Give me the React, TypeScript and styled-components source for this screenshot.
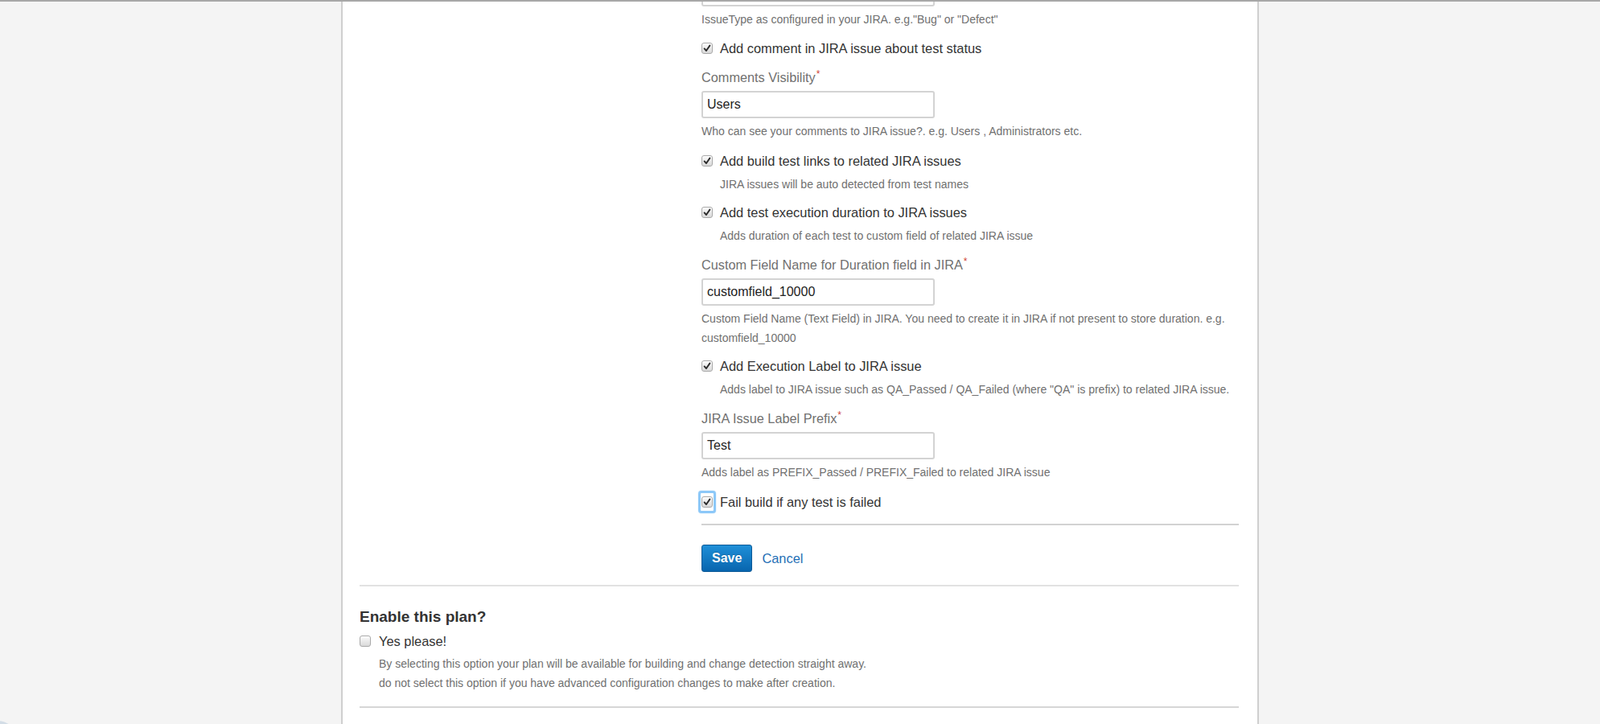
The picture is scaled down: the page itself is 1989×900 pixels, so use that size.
import styled, { createGlobalStyle } from 'styled-components';

const GlobalStyle = createGlobalStyle`
  html, body {
    margin: 0;
    padding: 0;
    height: 900px;
    overflow: hidden;
    background: #f4f4f4;
    font-family: "Liberation Sans", Arial, Helvetica, sans-serif;
    color: #333;
  }
`;

type Check = { label: string; sub?: string; checked?: boolean; focused?: boolean };

const CheckItem = ({ label, sub, checked = true, focused }: Check) => (
  <Group $gap={0}>
    <CheckRow>
      {focused ? (
        <FocusRing>
          <Box checked={checked} />
        </FocusRing>
      ) : (
        <Box checked={checked} />
      )}
      <CheckLabel>{label}</CheckLabel>
    </CheckRow>
    {sub && <SubText>{sub}</SubText>}
  </Group>
);

const Box = ({ checked }: { checked: boolean }) => (
  <CheckBox>
    {checked && (
      <svg width="14" height="14" viewBox="0 0 14 14">
        <path d="M3.6 7.4 L6 10 L10.4 3.6" fill="none" stroke="#2b2b2b" strokeWidth="1.9" strokeLinecap="round" strokeLinejoin="round" />
      </svg>
    )}
  </CheckBox>
);

const Field = ({ label, value, help }: { label: string; value: string; help: string[] }) => (
  <Group $gap={13}>
    <FieldLabel>
      {label}
      <Req>*</Req>
    </FieldLabel>
    <TextInput defaultValue={value} />
    <Help>
      {help.map((h) => (
        <div key={h}>{h}</div>
      ))}
    </Help>
  </Group>
);

const App = () => {
  return (
    <>
      <GlobalStyle />
      <Page>
        <Panel>
          <FormColumn>
            <TopInput defaultValue="" />
            <Help>IssueType as configured in your JIRA. e.g."Bug" or "Defect"</Help>
            <Spacer $h={12} />
            <CheckItem label="Add comment in JIRA issue about test status" />
            <Field
              label="Comments Visibility"
              value="Users"
              help={['Who can see your comments to JIRA issue?. e.g. Users , Administrators etc.']}
            />
            <Spacer $h={13} />
            <CheckItem
              label="Add build test links to related JIRA issues"
              sub="JIRA issues will be auto detected from test names"
            />
            <Spacer $h={11} />
            <CheckItem
              label="Add test execution duration to JIRA issues"
              sub="Adds duration of each test to custom field of related JIRA issue"
            />
            <Field
              label="Custom Field Name for Duration field in JIRA"
              value="customfield_10000"
              help={[
                'Custom Field Name (Text Field) in JIRA. You need to create it in JIRA if not present to store duration. e.g.',
                'customfield_10000',
              ]}
            />
            <Spacer $h={11} />
            <CheckItem
              label="Add Execution Label to JIRA issue"
              sub={'Adds label to JIRA issue such as QA_Passed / QA_Failed (where "QA" is prefix) to related JIRA issue.'}
            />
            <Field
              label="JIRA Issue Label Prefix"
              value="Test"
              help={['Adds label as PREFIX_Passed / PREFIX_Failed to related JIRA issue']}
            />
            <Spacer $h={13} />
            <CheckItem label="Fail build if any test is failed" focused />
            <Rule $top={15} $color="#d2d2d2" />
            <Buttons>
              <SaveButton type="button">Save</SaveButton>
              <CancelLink href="#">Cancel</CancelLink>
            </Buttons>
          </FormColumn>
          <Rule $top={16} $color="#e2e2e2" />
          <SectionTitle>Enable this plan?</SectionTitle>
          <PlanCheck>
            <Box checked={false} />
            <CheckLabel>Yes please!</CheckLabel>
          </PlanCheck>
          <PlanText>
            <div>By selecting this option your plan will be available for building and change detection straight away.</div>
            <div>do not select this option if you have advanced configuration changes to make after creation.</div>
          </PlanText>
          <Rule $top={17} $color="#d6d6d6" />
        </Panel>
      </Page>
      <CornerWidget />
    </>
  );
};

export default App;

const Page = styled.div`
  height: 900px;
  box-sizing: border-box;
  border-top: 2px solid #a7a7a7;
`;

const Panel = styled.div`
  width: 1141px;
  height: 100%;
  margin: 0 auto;
  box-sizing: border-box;
  background: #fff;
  border-left: 2px solid #cfcfcf;
  border-right: 2px solid #cfcfcf;
  padding: 0 23px 0 21px;
  overflow: hidden;
`;

const FormColumn = styled.div`
  margin-left: 425px;
`;

const Group = styled.div<{ $gap: number }>`
  margin-top: ${(p) => p.$gap}px;
`;

const Spacer = styled.div<{ $h: number }>`
  height: ${(p) => p.$h}px;
`;

const CheckRow = styled.label`
  display: flex;
  align-items: center;
  gap: 9px;
  height: 24px;
`;

const CheckBox = styled.span`
  width: 14px;
  height: 14px;
  box-sizing: border-box;
  border: 1px solid #a9a9a9;
  border-radius: 3px;
  background: linear-gradient(#fbfbfb, #d9d9d9);
  box-shadow: inset 0 1px 0 #fff;
  display: flex;
  align-items: center;
  justify-content: center;
  flex-shrink: 0;
  & > svg {
    margin: -1px;
  }
`;

const FocusRing = styled.span`
  display: flex;
  flex-shrink: 0;
  margin: -7px -4px;
  padding: 4px 1px;
  border: 3px solid #8cc8f8;
  border-radius: 4px;
  box-shadow: 0 0 1px #5aaef2;
`;

const CheckLabel = styled.span`
  font-size: 16.4px;
  line-height: 24px;
  color: #333;
`;

const SubText = styled.div`
  margin-top: 5px;
  padding-left: 23px;
  font-size: 14px;
  line-height: 24px;
  color: #707070;
`;

const FieldLabel = styled.div`
  padding-top: 1px;
  margin-bottom: 7px;
  font-size: 16.3px;
  line-height: 20px;
  color: #707070;
`;

const Req = styled.sup`
  color: #d04437;
  font-size: 12px;
  line-height: 0;
  margin-left: 1px;
`;

const TextInput = styled.input`
  display: block;
  width: 290px;
  height: 34px;
  box-sizing: border-box;
  border: 2px solid #d3d3d3;
  border-radius: 3px;
  padding: 0 5px;
  font-family: inherit;
  font-size: 16px;
  color: #222;
  background: #fff;
  outline: none;
`;

const TopInput = styled(TextInput)`
  margin-top: -28px;
`;

const Help = styled.div`
  margin-top: 4px;
  font-size: 14px;
  line-height: 24px;
  color: #707070;
`;

const Rule = styled.div<{ $top: number; $color: string }>`
  margin-top: ${(p) => p.$top}px;
  height: 2px;
  background: ${(p) => p.$color};
`;

const Buttons = styled.div`
  margin-top: 24px;
  display: flex;
  align-items: center;
  gap: 12px;
`;

const SaveButton = styled.button`
  height: 34px;
  padding: 0 12px;
  border: 1px solid #0d5a98;
  border-radius: 3px;
  background: linear-gradient(#1f8fd8, #0865ae);
  color: #fff;
  font-family: inherit;
  font-size: 16px;
  font-weight: bold;
  text-shadow: 0 -1px 0 rgba(0, 0, 0, 0.2);
  cursor: pointer;
`;

const CancelLink = styled.a`
  font-size: 16.4px;
  color: #1f6fb6;
  text-decoration: none;
`;

const SectionTitle = styled.h2`
  margin: 27px 0 0;
  font-size: 19px;
  line-height: 22px;
  font-weight: bold;
  color: #333;
`;

const PlanCheck = styled(CheckRow)`
  margin-top: 7px;
  gap: 10px;
`;

const PlanText = styled.div`
  margin-top: 4px;
  padding-left: 24px;
  font-size: 14px;
  line-height: 24px;
  color: #707070;
`;

const CornerWidget = styled.div`
  position: fixed;
  left: -22px;
  bottom: -36px;
  width: 40px;
  height: 40px;
  border-radius: 50%;
  background: #d3dde6;
`;
